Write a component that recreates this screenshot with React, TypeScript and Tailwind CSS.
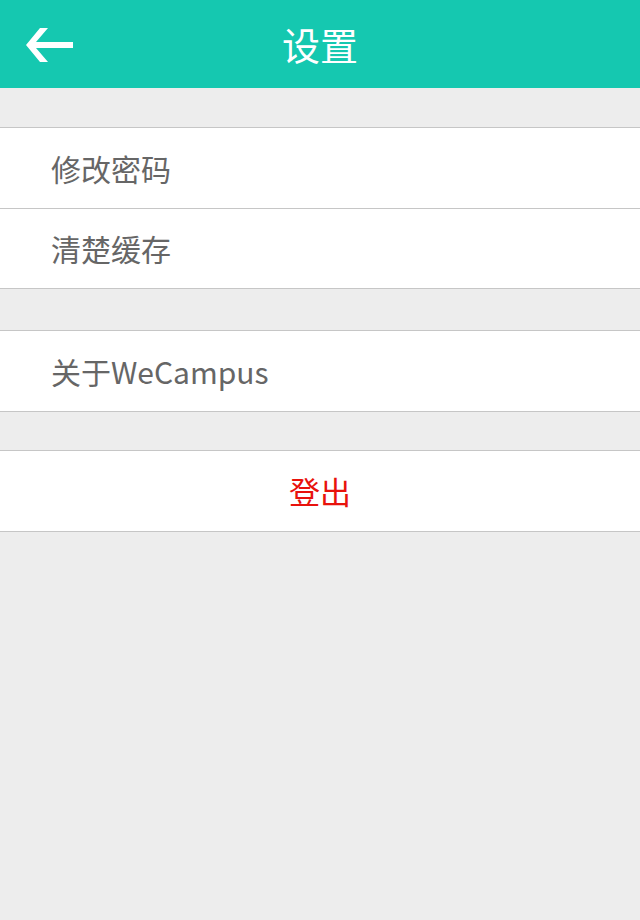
import React from 'react';

const font = { fontFamily: '"Noto Sans CJK SC", "Noto Sans", sans-serif' };

interface RowProps {
  label: string;
  height: string;
  last?: boolean;
}

const SettingRow = ({ label, height, last = false }: RowProps) => (
  <div
    className={`${height} flex items-center pl-[51px] bg-white text-[30px] text-[#666666] ${
      last ? '' : 'border-b border-[#c6c6c6]'
    }`}
  >
    {label}
  </div>
);

export default function App() {
  return (
    <div className="w-[640px] h-[920px] bg-[#ededed] flex flex-col" style={font}>
      <header className="h-[88px] bg-[#15c8b0] relative flex items-center justify-center shrink-0">
        <button className="absolute left-[26px] top-[28px]">
          <svg width="48" height="34" viewBox="0 0 48 34">
            <polygon
              points="0,17 14,0 22,0 10,14 47,14 47,20 10,20 22,34 14,34"
              fill="#ffffff"
            />
          </svg>
        </button>
        <h1 className="text-[38px] text-white leading-none">设置</h1>
      </header>

      <div className="mt-[39px] border-y border-[#c6c6c6]">
        <SettingRow label="修改密码" height="h-[81px]" />
        <SettingRow label="清楚缓存" height="h-[79px]" last />
      </div>

      <div className="mt-[41px] border-y border-[#c6c6c6]">
        <SettingRow label="关于WeCampus" height="h-[80px]" last />
      </div>

      <div className="mt-[38px] border-y border-[#c6c6c6]">
        <button className="w-full h-[80px] bg-white flex items-center justify-center text-[31px] text-[#e8120c]">
          登出
        </button>
      </div>
    </div>
  );
}
